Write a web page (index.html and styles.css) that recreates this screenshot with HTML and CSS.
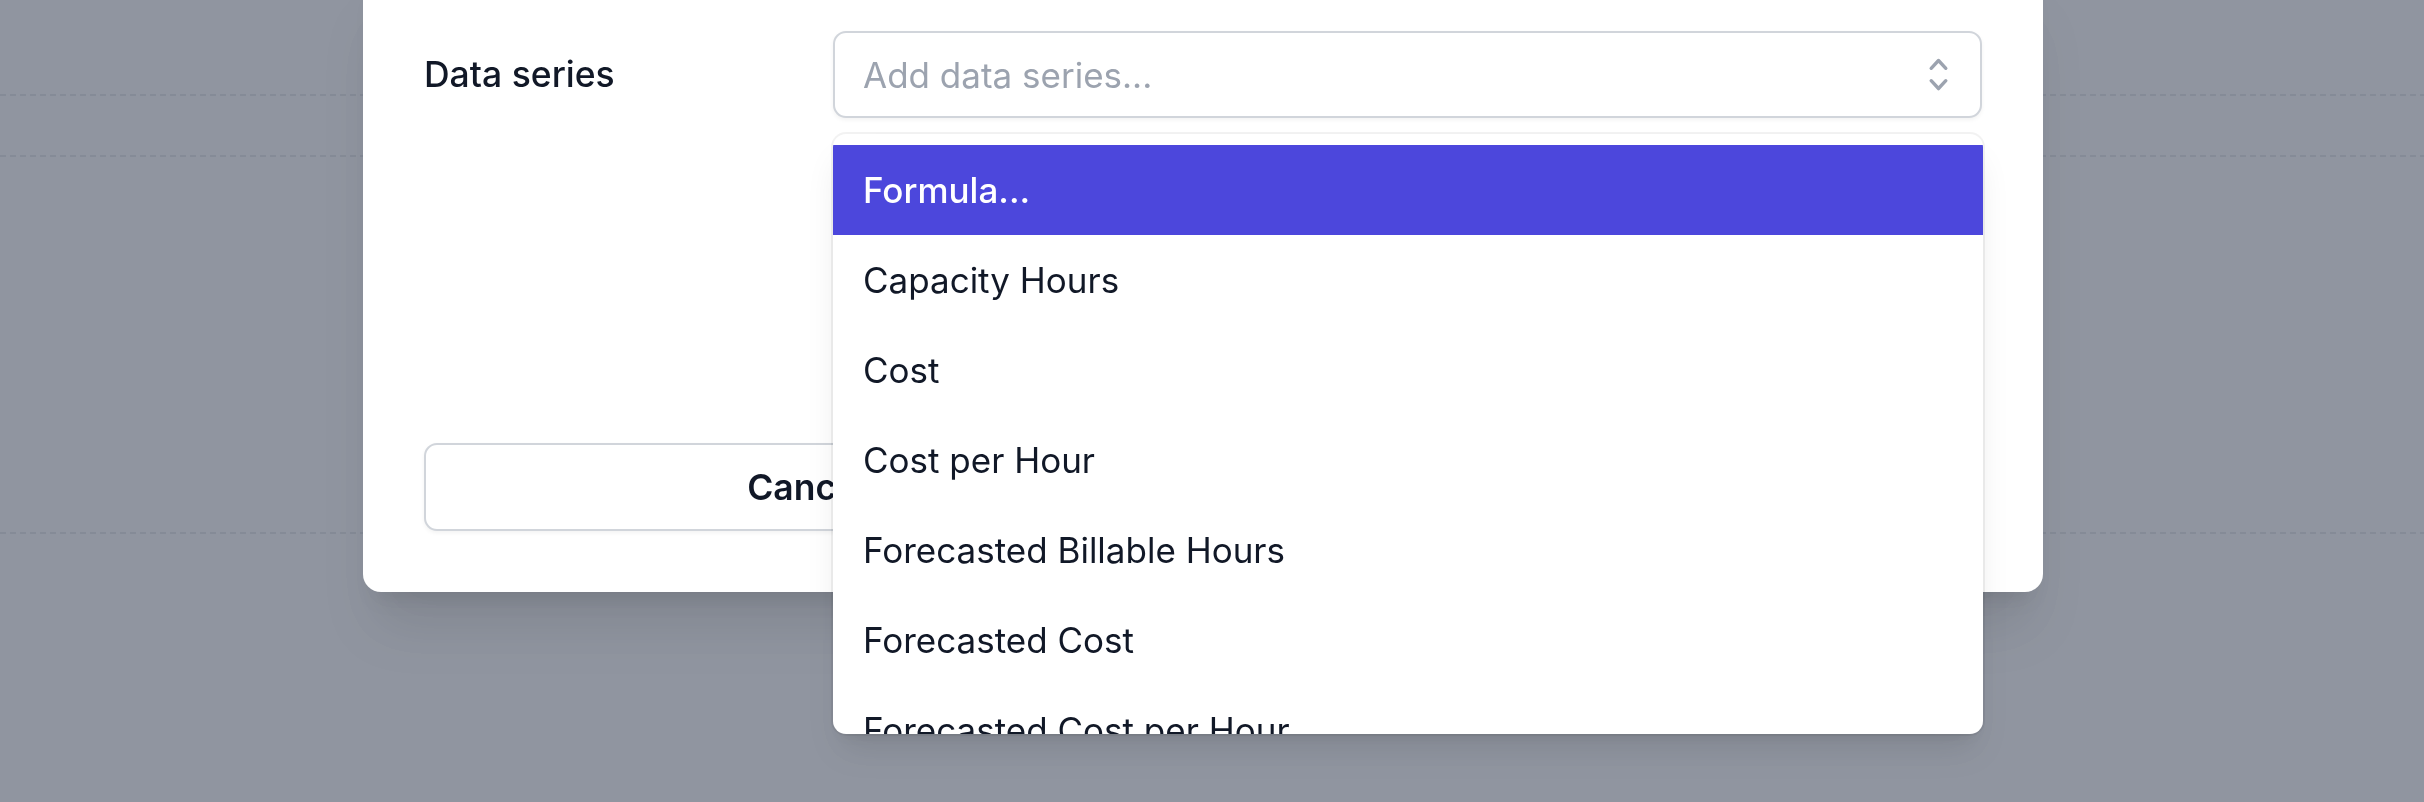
FILE: index.html
```html
<!DOCTYPE html>
<html lang="en">
<head>
<meta charset="utf-8">
<title>Add data series</title>
<link rel="stylesheet" href="styles.css">
</head>
<body>
<div class="page">
  <div class="gridline first"></div>
  <div class="gridline second"></div>
  <div class="gridline third"></div>
</div>
<div class="overlay"></div>
<div class="dialog-layer">
  <div class="modal">
    <div class="field-row">
      <label class="field-label">Data series</label>
      <div class="combobox">
        <div class="combo-input">
          <span class="placeholder">Add data series...</span>
          <span class="combo-button">
            <svg class="chevrons" viewBox="0 0 20 20" fill="currentColor" aria-hidden="true"><path fill-rule="evenodd" d="M10 3a.75.75 0 01.55.24l3.25 3.5a.75.75 0 11-1.1 1.02L10 4.852 7.3 7.760a.75.75 0 01-1.1-1.02l3.25-3.5A.75.75 0 0110 3zm-3.76 9.2a.75.75 0 011.06.04l2.7 2.908 2.7-2.908a.75.75 0 111.1 1.02l-3.25 3.5a.75.75 0 01-1.1 0l-3.25-3.5a.75.75 0 01.04-1.06z" clip-rule="evenodd"/></svg>
          </span>
        </div>
        <ul class="options">
          <li class="option active">Formula...</li>
          <li class="option">Capacity Hours</li>
          <li class="option">Cost</li>
          <li class="option">Cost per Hour</li>
          <li class="option">Forecasted Billable Hours</li>
          <li class="option">Forecasted Cost</li>
          <li class="option">Forecasted Cost per Hour</li>
          <li class="option">Forecasted Revenue</li>
        </ul>
      </div>
    </div>
    <div class="actions">
      <button class="btn btn-secondary">Cancel</button>
      <button class="btn btn-primary">Add</button>
    </div>
  </div>
</div>
</body>
</html>
```

FILE: styles.css
```css
* {
  box-sizing: border-box;
}

html, body {
  margin: 0;
  padding: 0;
  width: 2424px;
  height: 802px;
  overflow: hidden;
  background: #ffffff;
  font-family: Inter, "Noto Sans", "Liberation Sans", sans-serif;
}

.page {
  padding-top: 94px;
}

.gridline {
  height: 2px;
  background: repeating-linear-gradient(to right, #d1d5db 0 6px, transparent 6px 10px);
}

.gridline.second {
  margin-top: 59px;
}

.gridline.third {
  margin-top: 375px;
}

.overlay {
  position: fixed;
  inset: 0;
  background: rgba(107, 114, 128, 0.75);
}

.dialog-layer {
  position: fixed;
  inset: 0;
  padding-left: 363px;
}

.modal {
  width: 1680px;
  margin-top: -30px;
  padding: 61px 61px 61px;
  background: #ffffff;
  border-radius: 18px;
  box-shadow: 0 45px 56px -11px rgba(0, 0, 0, 0.1), 0 18px 22px -13px rgba(0, 0, 0, 0.1);
}

.field-row {
  display: grid;
  grid-template-columns: 409px 1fr;
  align-items: center;
}

.field-label {
  font-size: 35.5px;
  line-height: 54px;
  font-weight: 500;
  color: #111827;
}

.combobox {
  position: relative;
}

.combo-input {
  display: flex;
  align-items: center;
  justify-content: space-between;
  height: 87px;
  padding-left: 28px;
  border: 2px solid #d1d5db;
  border-radius: 13px;
  background: #ffffff;
  box-shadow: 0 2px 4px rgba(0, 0, 0, 0.05);
}

.placeholder {
  font-size: 35px;
  line-height: 54px;
  color: #9ca3af;
}

.combo-button {
  display: flex;
  align-items: center;
  padding: 0 19px;
  color: #9ca3af;
}

.chevrons {
  width: 45px;
  height: 45px;
  display: block;
}

.options {
  position: absolute;
  left: 0;
  right: -1px;
  top: calc(100% + 16px);
  height: 600px;
  margin: 0;
  padding: 11px 0 0;
  list-style: none;
  overflow: hidden;
  background: #ffffff;
  border-radius: 13px;
  box-shadow: 0 0 0 2px rgba(0, 0, 0, 0.05), 0 22px 34px -7px rgba(0, 0, 0, 0.1), 0 9px 13px -9px rgba(0, 0, 0, 0.1);
  z-index: 10;
}

.option {
  height: 90px;
  line-height: 90px;
  padding-left: 30px;
  font-size: 35px;
  color: #111827;
  white-space: nowrap;
}

.option.active {
  background: #4c47dc;
  color: #ffffff;
  font-weight: 500;
}

.actions {
  display: grid;
  grid-template-columns: 1fr 1fr;
  gap: 27px;
  margin-top: 325px;
}

.btn {
  height: 88px;
  border-radius: 13px;
  font-family: inherit;
  font-size: 35.5px;
  font-weight: 600;
  cursor: pointer;
}

.btn-secondary {
  background: #ffffff;
  color: #111827;
  border: 2px solid #d1d5db;
  box-shadow: 0 2px 4px rgba(0, 0, 0, 0.05);
}

.btn-primary {
  background: #4c47dc;
  color: #ffffff;
  border: 0;
}
```
